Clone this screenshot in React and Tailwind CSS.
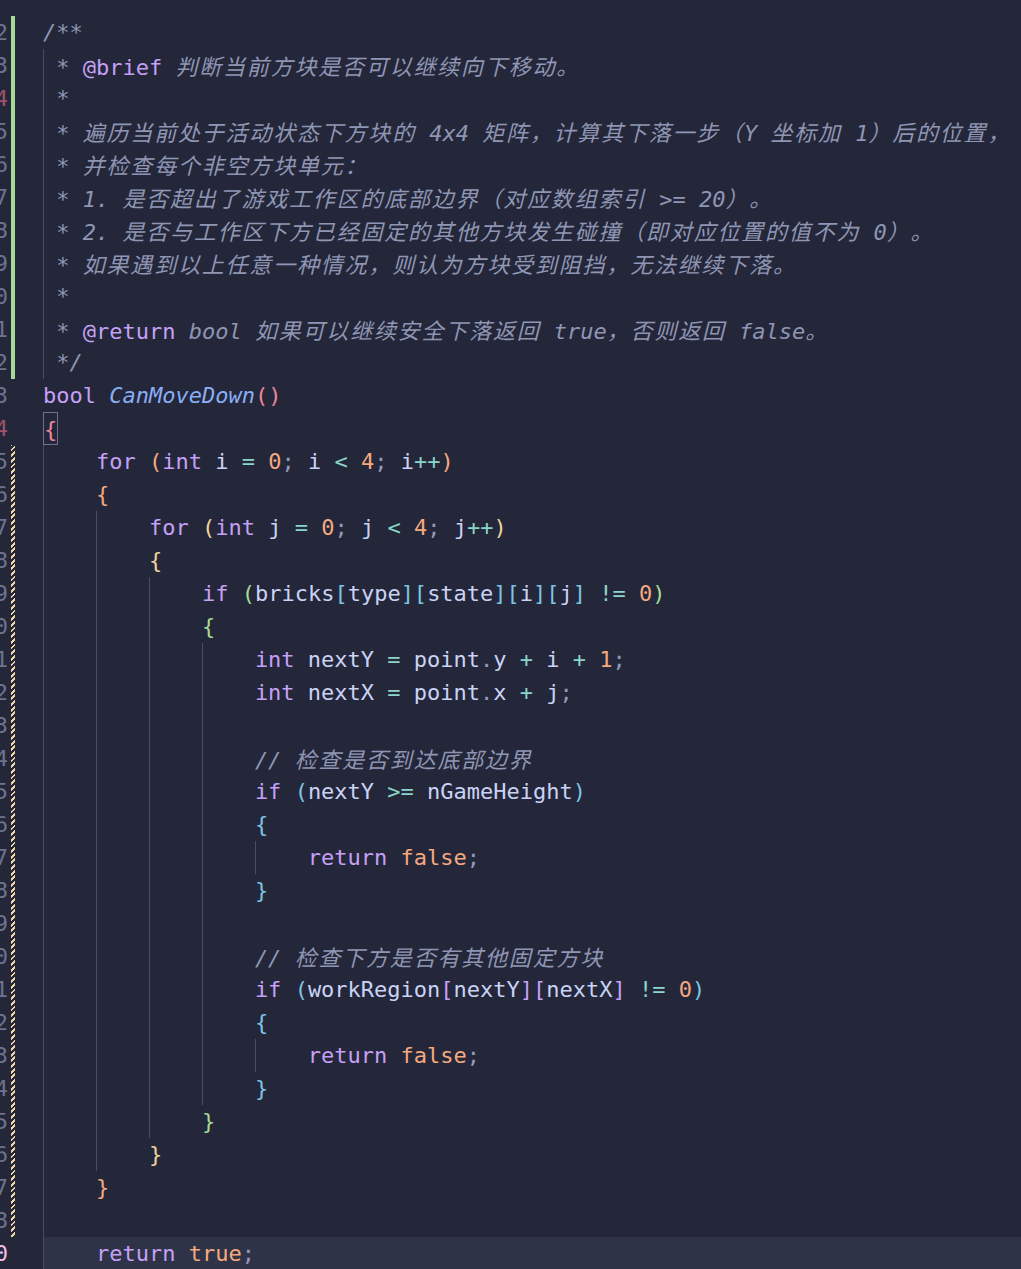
import React from "react";

// token colours (catppuccin macchiato-ish)
const t = "text-[#cad3f5]";
const k = "text-[#c6a0f6]";
const f = "text-[#8aadf4] italic";
const n = "text-[#f5a97f]";
const o = "text-[#8bd5ca]";
const p = "text-[#939ab7]";
const c = "text-[#8f96b3] italic";
const tag = "text-[#c6a0f6]";
const b0 = "text-[#ed8796]";
const b1 = "text-[#f5a97f]";
const b2 = "text-[#eed49f]";
const b3 = "text-[#a6da95]";
const b4 = "text-[#7dc4e4]";
const b5 = "text-[#c6a0f6]";
const box = "inline-block h-[33px] border border-[#6e738d] text-[#ed8796]";

const ret = [[k, "return"], [t, " "], [n, "false"], [p, ";"]];

// g: number of indent guides ("c" = one-space comment guide), bar: change marker
const lines = [
  { g: 0, bar: "add", t: [[c, "/**"]] },
  { g: "c", bar: "add", t: [[c, "* "], [tag, "@brief"], [c, " 判断当前方块是否可以继续向下移动。"]] },
  { g: "c", bar: "add", t: [[c, "*"]] },
  { g: "c", bar: "add", t: [[c, "* 遍历当前处于活动状态下方块的 4x4 矩阵，计算其下落一步（Y 坐标加 1）后的位置，"]] },
  { g: "c", bar: "add", t: [[c, "* 并检查每个非空方块单元："]] },
  { g: "c", bar: "add", t: [[c, "* 1. 是否超出了游戏工作区的底部边界（对应数组索引 >= 20）。"]] },
  { g: "c", bar: "add", t: [[c, "* 2. 是否与工作区下方已经固定的其他方块发生碰撞（即对应位置的值不为 0）。"]] },
  { g: "c", bar: "add", t: [[c, "* 如果遇到以上任意一种情况，则认为方块受到阻挡，无法继续下落。"]] },
  { g: "c", bar: "add", t: [[c, "*"]] },
  { g: "c", bar: "add", t: [[c, "* "], [tag, "@return"], [c, " bool 如果可以继续安全下落返回 true，否则返回 false。"]] },
  { g: "c", bar: "add", t: [[c, "*/"]] },
  { g: 0, t: [[k, "bool"], [t, " "], [f, "CanMoveDown"], [b0, "()"]] },
  { g: 0, t: [[box, "{"]] },
  { g: 1, bar: "mod", t: [[k, "for"], [t, " "], [b1, "("], [k, "int"], [t, " i "], [o, "="], [t, " "], [n, "0"], [p, ";"], [t, " i "], [o, "<"], [t, " "], [n, "4"], [p, ";"], [t, " i"], [o, "++"], [b1, ")"]] },
  { g: 1, bar: "mod", t: [[b1, "{"]] },
  { g: 2, bar: "mod", t: [[k, "for"], [t, " "], [b2, "("], [k, "int"], [t, " j "], [o, "="], [t, " "], [n, "0"], [p, ";"], [t, " j "], [o, "<"], [t, " "], [n, "4"], [p, ";"], [t, " j"], [o, "++"], [b2, ")"]] },
  { g: 2, bar: "mod", t: [[b2, "{"]] },
  { g: 3, bar: "mod", t: [[k, "if"], [t, " "], [b3, "("], [t, "bricks"], [b4, "["], [t, "type"], [b4, "]["], [t, "state"], [b4, "]["], [t, "i"], [b4, "]["], [t, "j"], [b4, "]"], [t, " "], [o, "!="], [t, " "], [n, "0"], [b3, ")"]] },
  { g: 3, bar: "mod", t: [[b3, "{"]] },
  { g: 4, bar: "mod", t: [[k, "int"], [t, " nextY "], [o, "="], [t, " point"], [p, "."], [t, "y "], [o, "+"], [t, " i "], [o, "+"], [t, " "], [n, "1"], [p, ";"]] },
  { g: 4, bar: "mod", t: [[k, "int"], [t, " nextX "], [o, "="], [t, " point"], [p, "."], [t, "x "], [o, "+"], [t, " j"], [p, ";"]] },
  { g: 4, bar: "mod", t: [] },
  { g: 4, bar: "mod", t: [[c, "// 检查是否到达底部边界"]] },
  { g: 4, bar: "mod", t: [[k, "if"], [t, " "], [b4, "("], [t, "nextY "], [o, ">="], [t, " nGameHeight"], [b4, ")"]] },
  { g: 4, bar: "mod", t: [[b4, "{"]] },
  { g: 5, bar: "mod", t: ret },
  { g: 4, bar: "mod", t: [[b4, "}"]] },
  { g: 4, bar: "mod", t: [] },
  { g: 4, bar: "mod", t: [[c, "// 检查下方是否有其他固定方块"]] },
  { g: 4, bar: "mod", t: [[k, "if"], [t, " "], [b4, "("], [t, "workRegion"], [b5, "["], [t, "nextY"], [b5, "]["], [t, "nextX"], [b5, "]"], [t, " "], [o, "!="], [t, " "], [n, "0"], [b4, ")"]] },
  { g: 4, bar: "mod", t: [[b4, "{"]] },
  { g: 5, bar: "mod", t: ret },
  { g: 4, bar: "mod", t: [[b4, "}"]] },
  { g: 3, bar: "mod", t: [[b3, "}"]] },
  { g: 2, bar: "mod", t: [[b2, "}"]] },
  { g: 1, bar: "mod", t: [[b1, "}"]] },
  { g: 1, bar: "mod", t: [] },
  { g: 1, t: [[k, "return"], [t, " "], [n, "true"], [p, ";"]], active: true },
];

function Text({ s }) {
  // CJK runs fall back to Noto Sans CJK, spaced a little wider like the editor
  const parts = s.split(/([\u3000-\u303f\u4e00-\u9fff\uff00-\uffef]+)/);
  return parts.map((part, i) =>
    i % 2 ? (
      <span
        key={i}
        className="font-['Noto_Sans_CJK_SC',sans-serif] tracking-[1.8px] [text-spacing-trim:space-all]"
      >
        {part}
      </span>
    ) : (
      part
    )
  );
}

function Row({ line, num }) {
  const guides = [];
  if (line.g === "c") {
    guides.push(<div key="c" className="h-full w-[1ch] shrink-0 border-l border-[#494d64]" />);
  } else {
    for (let i = 0; i < line.g; i++) {
      guides.push(<div key={i} className="h-full w-[4ch] shrink-0 border-l border-[#494d64]" />);
    }
  }

  let barCls = "";
  if (line.bar === "add") barCls = "bg-[#a6da95]";
  if (line.bar === "mod")
    barCls = "bg-fixed bg-[repeating-linear-gradient(-45deg,#eed49f_0px,#eed49f_2px,#24273a_2px,#24273a_4px)]";

  let numCls = "text-[#6e738d]";
  if (num === 24 || num === 34) numCls = "text-[#9c5368]";
  if (line.active) numCls = "text-[#f5bde6]";

  return (
    <div className="flex h-[33px]">
      <div className="flex w-[8px] justify-end overflow-hidden">
        <span className={"shrink-0 " + numCls}>{num}</span>
      </div>
      <div className="w-[35px] pl-[3px]">
        <div className={"h-full w-[4px] " + barCls} />
      </div>
      <div className={"flex flex-1 whitespace-pre " + (line.active ? "bg-[#2f3347]" : "")}>
        {guides}
        <span>
          {line.t.map(([cls, s], i) => (
            <span key={i} className={cls}>
              <Text s={s} />
            </span>
          ))}
        </span>
      </div>
    </div>
  );
}

export default function App() {
  return (
    <div className="h-[1269px] w-[1021px] overflow-hidden bg-[#24273a] pt-[16px] font-['DejaVu_Sans_Mono',monospace] text-[22px] leading-[33px]">
      {lines.map((line, i) => (
        <Row key={i} line={line} num={i === lines.length - 1 ? 60 : i + 22} />
      ))}
    </div>
  );
}
